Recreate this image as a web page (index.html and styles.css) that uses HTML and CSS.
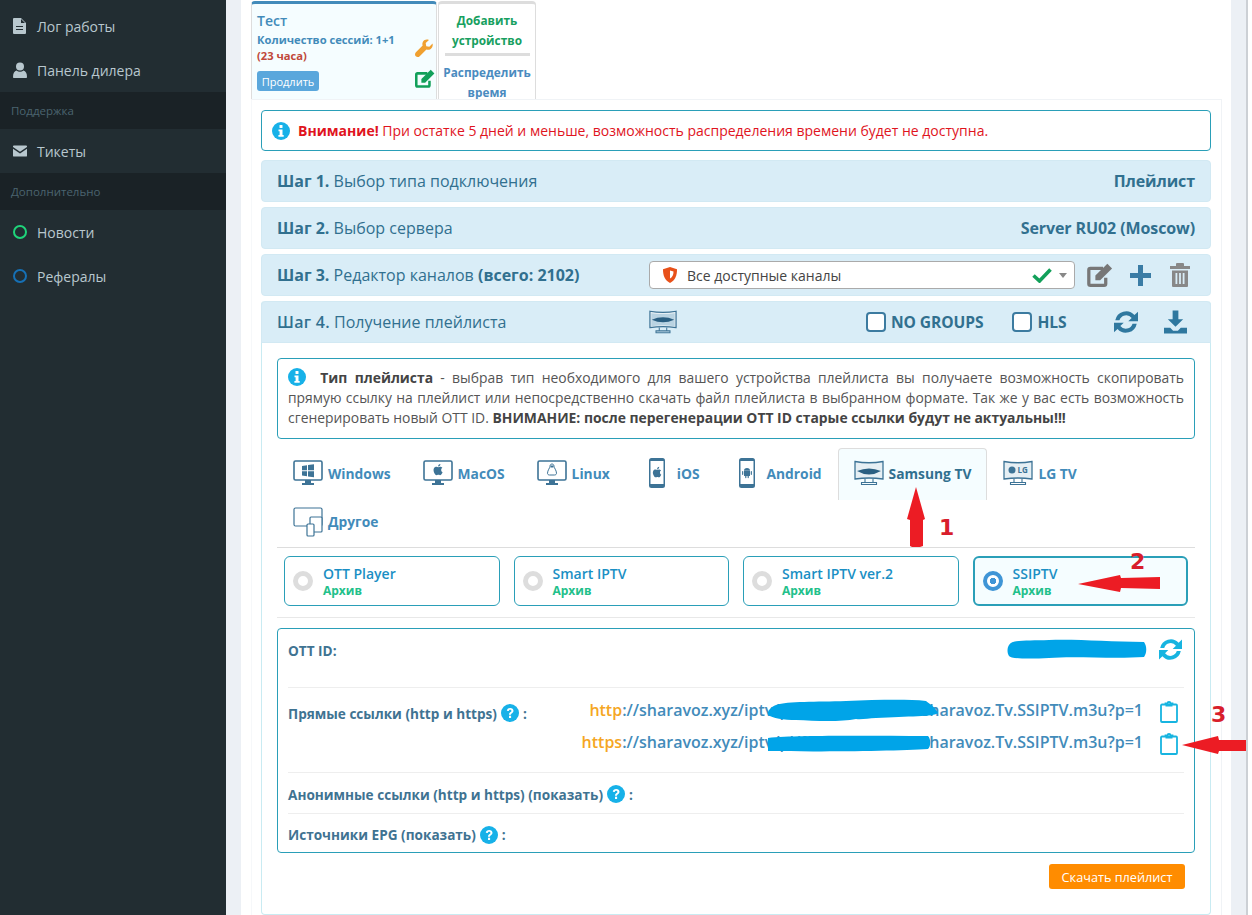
FILE: index.html
```html
<!DOCTYPE html>
<html lang="ru">
<head>
  <meta charset="UTF-8" />
  <title>Панель управления</title>
  <link rel="stylesheet" href="styles.css">
</head>
<body>
  <svg class="sprite" width="0" height="0">
    <symbol id="i-monitor" viewBox="0 0 30 30">
      <rect x="1" y="3" width="28" height="19" rx="1.500" fill="#fff" stroke="#3d7396" stroke-width="1.600"/>
      <rect x="12" y="22" width="6" height="3" fill="#3d7396"/>
      <rect x="9" y="25" width="12" height="2" fill="#3d7396"/>
    </symbol>
    <symbol id="i-tv" viewBox="0 0 30 30">
      <path d="M1 3.500Q15 6 29 3.500V21Q15 19 1 21z" fill="#e6eff4" stroke="#3d7396" stroke-width="1.300"/>
      <path d="M11 21v3.500M19 21v3.500M7.500 26.500h15v-2h-15z" fill="none" stroke="#3d7396" stroke-width="1.100"/>
    </symbol>
    <symbol id="i-phone" viewBox="0 0 30 30">
      <rect x="7" y="0" width="16" height="30" rx="2.500" fill="#3d7396"/>
      <rect x="8.500" y="3" width="13" height="23" fill="#fff"/>
    </symbol>
    <symbol id="i-apple" viewBox="0 0 20 20">
      <path d="M14.500 10.600c0-2 1.600-2.900 1.700-3-1-1.400-2.400-1.600-2.900-1.600-1.200-.1-2.400.7-3 .7-.6 0-1.600-.7-2.600-.7C6.300 6 5 6.800 4.300 8c-1.400 2.500-.4 6.100 1 8.100.7 1 1.500 2.100 2.500 2 1-.1 1.400-.6 2.600-.6 1.200 0 1.500.6 2.600.6 1.100 0 1.800-1 2.400-2 .8-1.100 1.100-2.200 1.100-2.300-.1 0-2-.8-2-3.200zM12.600 4.600c.5-.7.900-1.600.8-2.600-.8 0-1.800.5-2.400 1.200-.5.600-1 1.600-.8 2.500.9.100 1.800-.4 2.400-1.100z"/>
    </symbol>
    <symbol id="i-android" viewBox="0 0 20 20">
      <path d="M5 7.500h10V15a1 1 0 0 1-1 1h-1v2.500a1 1 0 0 1-2 0V16H9v2.500a1 1 0 0 1-2 0V16H6a1 1 0 0 1-1-1zM2.800 7.500a1 1 0 0 1 1 1v4.500a1 1 0 0 1-2 0V8.500a1 1 0 0 1 1-1zM17.200 7.500a1 1 0 0 1 1 1v4.500a1 1 0 0 1-2 0V8.500a1 1 0 0 1 1-1zM5 7a5 4.500 0 0 1 10 0z"/>
    </symbol>
    <symbol id="i-refresh" viewBox="2.500 2.500 19 19">
      <path d="M3.500 10.700A8.800 8.800 0 0 1 18.700 6.500L21.500 3.800V11.500H13.800L16.500 8.800A5.600 5.600 0 0 0 6.800 10.700zM20.500 13.300A8.800 8.800 0 0 1 5.300 17.500L2.500 20.200V12.500H10.200L7.500 15.200A5.600 5.600 0 0 0 17.200 13.300z"/>
    </symbol>
    <symbol id="i-clip" viewBox="0 0 18 23">
      <path d="M1 5.500a1 1 0 0 1 1-1h3.500V3.500h2a1.500 1.500 0 0 1 3 0h2V4.500H16a1 1 0 0 1 1 1V21a1 1 0 0 1-1 1H2a1 1 0 0 1-1-1z" fill="none" stroke="#17b4e0" stroke-width="1.800"/>
      <rect x="5.500" y="3.500" width="7" height="3" fill="#17b4e0"/>
    </symbol>
    <symbol id="i-info" viewBox="0 0 18 18">
      <circle cx="9" cy="9" r="9" fill="#17b1e8"/>
      <rect x="7.500" y="3" width="3" height="3" rx=".6" fill="#fff"/>
      <path d="M6.500 7.500h4v5.500h1.200v1.700H6.400V13h1.200V9.200H6.500z" fill="#fff"/>
    </symbol>
    <symbol id="i-help" viewBox="0 0 18 18">
      <circle cx="9" cy="9" r="9" fill="#17b1e8"/>
      <path d="M5.800 6.800C6 5 7.300 4 9.200 4c2 0 3.300 1.100 3.300 2.800 0 1.300-.8 1.900-1.500 2.400-.7.500-1 .8-1 1.600H8c0-1.400.5-2 1.200-2.500.6-.4 1.200-.8 1.200-1.400 0-.7-.5-1.100-1.200-1.100-.8 0-1.300.5-1.400 1.300z" fill="#fff"/>
      <rect x="8" y="11.700" width="2.100" height="2.300" fill="#fff"/>
    </symbol>
    <symbol id="i-edit" viewBox="1 1 23.500 22">
      <path d="M18 14.500V20a1.500 1.500 0 0 1-1.500 1.500H4A1.500 1.500 0 0 1 2.500 20V7.500A1.500 1.500 0 0 1 4 6h11.500" fill="none" stroke="currentColor" stroke-width="3"/>
      <path d="M8.500 12.500L19.500 1.800l4.300 4.200-10.900 10.900H8.500z" fill="currentColor"/>
    </symbol>
  </svg>

  <div class="app">
    <aside class="sidebar">
      <a class="side-item">
        <svg class="side-icon" viewBox="0 0 14 16"><path d="M1 0h7l5 5v10a1 1 0 0 1-1 1H1a1 1 0 0 1-1-1V1a1 1 0 0 1 1-1zM8 1v4h4zM3 8v1h7V8zM3 11v1h7v-1z" fill-rule="evenodd"/></svg>
        Лог работы
      </a>
      <a class="side-item">
        <svg class="side-icon" viewBox="0 0 14 16"><circle cx="7" cy="4.500" r="4"/><path d="M0 15c0-4 1.500-6 3.500-6.500 1 .8 2.200 1.200 3.500 1.200s2.500-.4 3.500-1.200C12.500 9 14 11 14 15c0 .6-.5 1-1 1H1c-.5 0-1-.4-1-1z"/></svg>
        Панель дилера
      </a>
      <div class="side-header">Поддержка</div>
      <a class="side-item">
        <svg class="side-icon" viewBox="0 0 15 12"><path d="M0 1a1 1 0 0 1 1-1h13a1 1 0 0 1 1 1v.800L7.500 6.800 0 1.800zM0 3.600l7.500 5 7.500-5V11a1 1 0 0 1-1 1H1a1 1 0 0 1-1-1z"/></svg>
        Тикеты
      </a>
      <div class="side-header">Дополнительно</div>
      <a class="side-item"><span class="ring ring-green"></span>Новости</a>
      <a class="side-item"><span class="ring ring-blue"></span>Рефералы</a>
    </aside>

    <main class="main">
      <div class="card">
        <div class="device-tabs">
          <div class="device-tab active">
            <div class="device-info">
              <div class="device-name">Тест</div>
              <div class="device-sess">Количество сессий: 1+1</div>
              <div class="device-left">(23 часа)</div>
              <button class="btn-renew">Продлить</button>
            </div>
            <div class="device-tools">
              <svg class="tool-wrench" viewBox="0 0 20 20"><path d="M19.500 4.500l-3.600 3.500-3.400-.6-.6-3.400L15.500.5C13-.5 10 .2 8.800 2.400 8 3.900 8 5.400 8.500 6.800L1 14.300c-1.300 1.300-1.300 3.100-.1 4.300s3 1.200 4.300-.1l7.500-7.500c1.400.5 3 .5 4.400-.3 2.300-1.200 3-4.200 2.400-6.200z"/></svg>
              <svg class="tool-edit"><use href="#i-edit"/></svg>
            </div>
          </div>
          <div class="device-tab side">
            <div class="add-link">Добавить устройство</div>
            <div class="tab-divider"></div>
            <div class="share-link">Распределить время</div>
          </div>
        </div>

        <div class="content">
          <div class="alert">
            <svg class="info-icon"><use href="#i-info"/></svg>
            <span class="warn"><b>Внимание!</b> При остатке 5 дней и меньше, возможность распределения времени будет не доступна.</span>
          </div>

          <div class="step">
            <div class="step-title"><b>Шаг 1.</b> Выбор типа подключения</div>
            <div class="step-value">Плейлист</div>
          </div>
          <div class="step">
            <div class="step-title"><b>Шаг 2.</b> Выбор сервера</div>
            <div class="step-value">Server RU02 (Moscow)</div>
          </div>
          <div class="step">
            <div class="step-title fixed"><b>Шаг 3.</b> Редактор каналов <b>(всего: 2102)</b></div>
            <div class="select">
              <svg class="shield" viewBox="0 0 14 16"><path d="M7 0l7 2.200c0 6-1.500 10.800-7 13.800C1.500 13 0 8.200 0 2.200z" fill="#e8511a"/><path d="M7 3.500l3.500 1.100c0 3-.8 5.400-3.500 7z" fill="#fff"/></svg>
              <span class="select-text">Все доступные каналы</span>
              <svg class="check" viewBox="0 0 20 16"><path d="M1.500 8.500L7.500 14 18.500 2.500" fill="none" stroke="#12a05a" stroke-width="3.600"/></svg>
              <span class="caret"></span>
            </div>
            <svg class="act-edit"><use href="#i-edit"/></svg>
            <svg class="act-plus" viewBox="0 0 21 21"><path d="M8 0h5v8h8v5h-8v8H8v-8H0V8h8z"/></svg>
            <svg class="act-trash" viewBox="0 0 20 24"><path d="M0 3h6V1a1 1 0 0 1 1-1h6a1 1 0 0 1 1 1v2h6v3H0zM2 7.500h16V23a1 1 0 0 1-1 1H3a1 1 0 0 1-1-1zM5.500 10v11h1.800V10zM9.100 10v11h1.800V10zM12.700 10v11h1.800V10z" fill-rule="evenodd"/></svg>
          </div>

          <div class="panel">
            <div class="step open">
              <div class="step-title fixed"><b class="normal">Шаг 4.</b> Получение плейлиста</div>
              <svg class="head-tv" viewBox="0 0 30 30">
                <use href="#i-tv"/>
                <path d="M2.500 5.500Q15 7.500 27.500 5.500V19.500Q15 17.500 2.500 19.500z" fill="#b9d3e2"/>
                <path d="M3 12.500Q15 7.500 27 12.500 15 18 3 12.500z" fill="#2a5f82"/>
              </svg>
              <label class="check-label first"><span class="checkbox"></span>NO GROUPS</label>
              <label class="check-label second"><span class="checkbox"></span>HLS</label>
              <svg class="head-refresh"><use href="#i-refresh"/></svg>
              <svg class="head-download" viewBox="0 0 24 24"><path d="M9 0h6v9h5l-8 8-8-8h5zM0 18h6.500l3 3h5l3-3H24v6H0z"/></svg>
            </div>

            <div class="panel-body">
              <div class="info-box">
                <svg class="info-icon"><use href="#i-info"/></svg>
                <b>Тип плейлиста</b> - выбрав тип необходимого для вашего устройства плейлиста вы получаете возможность скопировать прямую ссылку на плейлист или непосредственно скачать файл плейлиста в выбранном формате. Так же у вас есть возможность сгенерировать новый OTT ID. <b>ВНИМАНИЕ: после перегенерации OTT ID старые ссылки будут не актуальны!!!</b>
              </div>

              <div class="os-tabs">
                <a class="os-tab">
                  <svg class="os-icon" viewBox="0 0 30 30"><use href="#i-monitor"/><path d="M9 8l5-.7v5H9zM15 7.100l6-.8v6h-6zM9 13.300h5v5L9 17.600zM15 13.300h6v6l-6-.8z" fill="#3d7396"/></svg>
                  Windows
                </a>
                <a class="os-tab">
                  <svg class="os-icon" viewBox="0 0 30 30"><use href="#i-monitor"/><use href="#i-apple" x="8" y="4" width="14" height="15" fill="#3d7396"/></svg>
                  MacOS
                </a>
                <a class="os-tab">
                  <svg class="os-icon" viewBox="0 0 30 30"><use href="#i-monitor"/><path d="M15 6c1.300 0 2 1 2 2.300 0 1.500 2.500 4 2.500 7 0 1-.8 1.700-2 1.700h-5c-1.200 0-2-.7-2-1.700 0-3 2.500-5.500 2.500-7C13 7 13.700 6 15 6z" fill="none" stroke="#3d7396"/><path d="M13.500 7.500h3v2h-3z" fill="#3d7396"/></svg>
                  Linux
                </a>
                <a class="os-tab">
                  <svg class="os-icon" viewBox="0 0 30 30"><use href="#i-phone"/><use href="#i-apple" x="8.500" y="6" width="13" height="16" fill="#3d7396"/></svg>
                  iOS
                </a>
                <a class="os-tab">
                  <svg class="os-icon" viewBox="0 0 30 30"><use href="#i-phone"/><use href="#i-android" x="9" y="7" width="12" height="15" fill="#3d7396"/></svg>
                  Android
                </a>
                <a class="os-tab current">
                  <svg class="os-icon" viewBox="0 0 30 30"><use href="#i-tv"/><path d="M3 13Q15 8 27 13 15 20 3 13z" fill="#2a5f82"/></svg>
                  Samsung TV
                </a>
                <a class="os-tab">
                  <svg class="os-icon" viewBox="0 0 30 30"><use href="#i-tv"/><circle cx="9" cy="12" r="3.500" fill="#3d7396"/><text class="lg-mark" x="14.500" y="15">LG</text></svg>
                  LG TV
                </a>
                <a class="os-tab other">
                  <svg class="os-icon" viewBox="0 0 30 30">
                    <rect x="1" y="1" width="28" height="18" rx="1.500" fill="none" stroke="#3d7396" stroke-width="1.200"/>
                    <rect x="17" y="10" width="12" height="15" rx="1" fill="#fff" stroke="#3d7396" stroke-width="1.200"/>
                    <rect x="14" y="17" width="7" height="12" rx="1" fill="#fff" stroke="#3d7396" stroke-width="1.200"/>
                  </svg>
                  Другое
                </a>
              </div>

              <div class="player-grid">
                <div class="player"><span class="radio"></span><div><div class="player-name">OTT Player</div><div class="player-tag">Архив</div></div></div>
                <div class="player"><span class="radio"></span><div><div class="player-name">Smart IPTV</div><div class="player-tag">Архив</div></div></div>
                <div class="player"><span class="radio"></span><div><div class="player-name">Smart IPTV ver.2</div><div class="player-tag">Архив</div></div></div>
                <div class="player selected"><span class="radio on"></span><div><div class="player-name">SSIPTV</div><div class="player-tag">Архив</div></div></div>
              </div>

              <div class="divider"></div>

              <div class="links-box">
                <div class="links-row ott">
                  <div class="links-label">OTT ID:</div>
                  <svg class="ott-refresh"><use href="#i-refresh"/></svg>
                </div>
                <div class="links-row direct">
                  <div class="links-label">Прямые ссылки (http и https) <svg class="help"><use href="#i-help"/></svg> :</div>
                  <div class="links-list">
                    <div class="link-line">
                      <span class="link"><span class="proto">http</span>://sharavoz.xyz/iptv/pl/000000000000-/sharavoz.Tv.SSIPTV.m3u?p=1</span>
                      <svg class="clip"><use href="#i-clip"/></svg>
                    </div>
                    <div class="link-line">
                      <span class="link"><span class="proto">https</span>://sharavoz.xyz/iptv/pl/000000000000-/sharavoz.Tv.SSIPTV.m3u?p=1</span>
                      <svg class="clip"><use href="#i-clip"/></svg>
                    </div>
                  </div>
                </div>
                <div class="links-row short">
                  <div class="links-label">Анонимные ссылки (http и https) (показать) <svg class="help"><use href="#i-help"/></svg> :</div>
                </div>
                <div class="links-row short last">
                  <div class="links-label">Источники EPG (показать) <svg class="help"><use href="#i-help"/></svg> :</div>
                </div>
              </div>

              <div class="actions"><button class="btn-download">Скачать плейлист</button></div>
            </div>
          </div>
        </div>
      </div>
    </main>
    <div class="edge"></div>
  </div>

  <!-- пометки поверх скриншота -->
  <svg class="marks" viewBox="0 0 1252 915">
    <g fill="#00a4e8">
      <path d="M1009 645c3-6 20-4 40-5 30-1 60 2 95 2 3 4 3 11 0 15-30 2-70-1-95 1-18 1-38 1-40-2-2-3-2-8 0-11z"/>
      <path d="M776 705c12-4 40-3 70-4 30-1 60-2 80 0 4 3 10 7 12 12-4 4-30 3-62 5-8 0-14 2-20 1-15 3-40 2-60 1-12 0-24-2-28-5-1-4 3-8 8-10z"/>
      <path d="M768 738c30-3 100-2 160-2 3 3 3 10 0 13-30 2-110 3-160 2z"/>
    </g>
    <g fill="#ec1c24">
      <path d="M916 487l9 32-2 1v26l-3 1h-8l-2-1v-26l-3-1z"/>
      <path d="M1078 584l42-9 1 3 39-1 0 12-39-1-1 4z"/>
      <path d="M1182 745l36-9 1 4h27v11h-27l-1 3z"/>
    </g>
    <text class="mark-num" x="939" y="535">1</text>
    <text class="mark-num" x="1130" y="569">2</text>
    <text class="mark-num" x="1211" y="722">3</text>
  </svg>
</body>
</html>
```

FILE: styles.css
```css
* {
  box-sizing: border-box;
}
html, body {
  margin: 0;
  height: 915px;
  overflow: hidden;
}
body {
  position: relative;
  font-family: "Open Sans", "Noto Sans", sans-serif;
  font-size: 14px;
  color: #555;
  background: #fff;
}
button {
  font-family: inherit;
  border: none;
}
.sprite {
  position: absolute;
}
.app {
  display: flex;
  height: 915px;
}

/* sidebar */
.sidebar {
  width: 226px;
  flex: none;
  padding-top: 4px;
  background: #222d32;
}
.side-item {
  display: flex;
  align-items: center;
  height: 44px;
  padding-left: 13px;
  color: #b8c7ce;
  font-size: 14px;
}
.side-icon {
  width: 14px;
  height: 16px;
  margin-right: 10px;
  fill: #b8c7ce;
}
.side-header {
  height: 37px;
  padding-left: 11px;
  line-height: 37px;
  font-size: 11.5px;
  color: #4b646f;
  background: #1a2226;
}
.ring {
  width: 14px;
  height: 14px;
  margin-right: 10px;
  border: 2px solid;
  border-radius: 50%;
}
.ring-green {
  border-color: #1fd47a;
}
.ring-blue {
  border-color: #1670b5;
}

/* main */
.main {
  flex: 1;
  padding: 0 15px;
  background: #ecf0f5;
}
.edge {
  width: 6px;
  flex: none;
  border-left: 2px solid #ccd0d5;
  background: #fff;
}
.card {
  height: 915px;
  padding: 1px 9px 0 10px;
  background: #fff;
}
.device-tabs {
  display: flex;
  height: 98px;
  gap: 1px;
}
.device-tab {
  display: flex;
  border-radius: 4px 4px 0 0;
  border: 1px solid #ddd;
  border-bottom: none;
  overflow: hidden;
}
.device-tab.active {
  width: 186px;
  padding: 8px 1px 0 5px;
  justify-content: space-between;
  border-top: 3px solid #428bba;
  background: #f5fdff;
}
.device-tab.side {
  width: 98px;
  flex-direction: column;
  align-items: center;
  padding-top: 6px;
  border-top: 3px solid #ddd;
  font-size: 11.8px;
  font-weight: 700;
  line-height: 20px;
  text-align: center;
}
.device-name {
  font-size: 14px;
  font-weight: 600;
  line-height: 18px;
  color: #428bba;
}
.device-sess {
  margin-top: 2px;
  font-size: 11.2px;
  font-weight: 700;
  line-height: 16px;
  color: #428bba;
}
.device-left {
  font-size: 11.2px;
  font-weight: 700;
  line-height: 16px;
  color: #c0483a;
}
.btn-renew {
  display: block;
  width: 62px;
  height: 20px;
  margin-top: 7px;
  padding: 0;
  border-radius: 3px;
  font-size: 11px;
  color: #fff;
  background: #5aa7dc;
}
.device-tools {
  display: flex;
  flex-direction: column;
  align-items: flex-end;
  padding-top: 27px;
}
.tool-wrench {
  width: 18px;
  height: 19px;
  fill: #f0a030;
  margin-right: 2px;
}
.tool-edit {
  width: 20px;
  height: 19px;
  margin-top: 11px;
  color: #12a05a;
}
.add-link {
  width: 80px;
  color: #18a060;
}
.tab-divider {
  flex: none;
  width: 85px;
  height: 3px;
  margin: 3px 0 6px;
  background: #ddd;
}
.share-link {
  flex: none;
  color: #4a8bbf;
}

.content {
  height: 816px;
  padding: 10px 10px 0 9px;
  border-top: 1px solid #f0f3f6;
  border-left: 1px solid #f6f8fa;
  border-right: 1px solid #f0f3f6;
}
.alert {
  display: flex;
  align-items: center;
  height: 41px;
  margin-bottom: 9px;
  padding: 0 10px;
  border: 1px solid #2a9fb8;
  border-radius: 4px;
  font-size: 14px;
}
.info-icon {
  width: 18px;
  height: 18px;
  margin-right: 8px;
  flex: none;
}
.warn {
  color: #e0141e;
}

/* steps */
.step {
  display: flex;
  align-items: center;
  height: 42px;
  margin-bottom: 5px;
  padding: 0 15px;
  border: 1px solid #d2e9f3;
  border-radius: 4px;
  font-size: 16px;
  color: #31708f;
  background: #d9edf7;
}
.step-title {
  flex: 1;
}
.step-title.fixed {
  flex: none;
  width: 372px;
}
.step-value {
  font-size: 16px;
  font-weight: 700;
  letter-spacing: -.1px;
}
.normal {
  font-weight: 600;
  letter-spacing: .3px;
}
.select {
  display: flex;
  align-items: center;
  width: 426px;
  height: 28px;
  padding: 0 7px 0 13px;
  border: 1px solid #aaa;
  border-radius: 4px;
  background: #fff;
}
.shield {
  width: 14px;
  height: 16px;
  margin-right: 10px;
}
.select-text {
  flex: 1;
  font-size: 14px;
  color: #444;
}
.check {
  width: 20px;
  height: 16px;
  margin-right: 7px;
}
.caret {
  width: 0;
  height: 0;
  border-left: 4px solid transparent;
  border-right: 4px solid transparent;
  border-top: 5px solid #888;
}
.act-edit {
  width: 26px;
  height: 24px;
  margin-left: 12px;
  color: #777;
}
.act-plus {
  width: 21px;
  height: 21px;
  margin-left: 17px;
  fill: #3a7ca5;
}
.act-trash {
  width: 20px;
  height: 24px;
  margin-left: 19px;
  fill: #888;
}

/* step 4 */
.panel {
  height: 614px;
  border: 1px solid #c9ebf2;
  border-top: none;
  border-radius: 4px;
}
.step.open {
  margin: 0 -1px;
  border-radius: 4px 4px 0 0;
}
.head-tv {
  width: 28px;
  height: 28px;
  flex: none;
}
.check-label {
  display: flex;
  align-items: center;
  font-size: 15.6px;
  font-weight: 700;
  letter-spacing: -.1px;
}
.check-label.first {
  margin-left: 189px;
}
.check-label.second {
  margin-left: 29px;
}
.checkbox {
  width: 20px;
  height: 20px;
  margin-right: 5px;
  border: 2px solid #3c7ba0;
  border-radius: 4px;
  background: #fff;
}
.head-refresh {
  width: 24px;
  height: 24px;
  margin-left: 48px;
  fill: #2f789f;
}
.head-download {
  width: 23px;
  height: 24px;
  margin-left: 26px;
  fill: #2f789f;
}
.panel-body {
  padding: 15px;
}
.info-box {
  padding: 9px 10px 0;
  height: 81px;
  border: 1px solid #2a9fb8;
  border-radius: 4px;
  font-size: 13.9px;
  line-height: 20px;
  text-align: justify;
  color: #555;
}
.info-box .info-icon {
  margin-right: 7px;
  vertical-align: -3px;
}
.info-box b {
  color: #444;
}

.os-tabs {
  display: flex;
  flex-wrap: wrap;
  margin-top: 9px;
  border-bottom: 1px solid #ddd;
}
.os-tab {
  display: flex;
  align-items: center;
  height: 52px;
  padding: 0 15px 3px;
  gap: 5px;
  border: 1px solid transparent;
  border-bottom: none;
  border-radius: 4px 4px 0 0;
  font-size: 13.8px;
  font-weight: 700;
  color: #428bba;
}
.os-tab.current {
  border-color: #ddd;
  color: #31708f;
  background: #f5fdff;
}
.os-tab.other {
  height: 47px;
  padding-bottom: 5px;
}
.os-icon {
  width: 30px;
  height: 30px;
  flex: none;
}
.lg-mark {
  font-size: 8px;
  font-weight: 700;
  fill: #3d7396;
}

.player-grid {
  display: grid;
  grid-template-columns: repeat(4, 1fr);
  gap: 14px;
  margin: 8px 7px 0;
}
.player {
  display: flex;
  align-items: center;
  height: 50px;
  padding: 2px 0 0 8px;
  border: 1px solid #2a9fb8;
  border-radius: 6px;
}
.player.selected {
  border-width: 2px;
  padding-left: 8px;
  background: #f5fdff;
}
.radio {
  width: 20px;
  height: 20px;
  margin: -2px 10px 0 0;
  border: 5px solid #ddd;
  border-radius: 50%;
  background: #fff;
}
.radio.on {
  border: 4px solid #3f95d6;
  background: radial-gradient(circle, #3f95d6 3px, #fff 3.5px);
}
.player-name {
  font-size: 14px;
  font-weight: 600;
  line-height: 18px;
  color: #1a8fc4;
}
.player-tag {
  font-size: 12px;
  font-weight: 700;
  line-height: 16px;
  color: #22c08a;
}
.divider {
  height: 1px;
  margin: 11px 0 10px;
  background: #e8e8e8;
}

.links-box {
  height: 225px;
  padding: 0 10px;
  border: 1px solid #2a9fb8;
  border-radius: 4px;
}
.links-row {
  display: flex;
  border-bottom: 1px solid #eee;
}
.links-row.ott {
  justify-content: space-between;
  height: 59px;
  padding-top: 11px;
}
.links-row.direct {
  height: 85px;
  padding-top: 12px;
}
.links-row.short {
  align-items: center;
  height: 41px;
  padding-top: 2px;
}
.links-row.last {
  height: 39px;
  border-bottom: none;
}
.links-row.direct .links-label {
  margin-top: 3px;
}
.links-label {
  display: flex;
  align-items: center;
  gap: 4px;
  height: 20px;
  font-size: 13.6px;
  font-weight: 700;
  color: #3f7392;
}
.help {
  width: 18px;
  height: 18px;
}
.ott-refresh {
  width: 23px;
  height: 23px;
  margin: -2px 2px 0 0;
  fill: #17b4e0;
}
.links-list {
  flex: 1;
}
.link-line {
  display: flex;
  justify-content: flex-end;
  height: 32px;
}
.link {
  font-size: 16px;
  font-weight: 600;
  line-height: 21px;
  color: #428bba;
  white-space: nowrap;
}
.proto {
  color: #f5a623;
}
.clip {
  width: 18px;
  height: 23px;
  margin: 0 6px 0 17px;
}
.actions {
  display: flex;
  justify-content: flex-end;
  margin-top: 11px;
  padding-right: 10px;
}
.btn-download {
  width: 136px;
  height: 25px;
  padding: 0;
  border-radius: 3px;
  font-size: 12.7px;
  color: #fff;
  background: #ff8c00;
}

/* annotations */
.marks {
  position: absolute;
  left: 0;
  top: 0;
  width: 1252px;
  height: 915px;
  pointer-events: none;
}
.mark-num {
  font-family: "DejaVu Sans", sans-serif;
  font-size: 22px;
  font-weight: 700;
  fill: #d81e2c;
}
```
